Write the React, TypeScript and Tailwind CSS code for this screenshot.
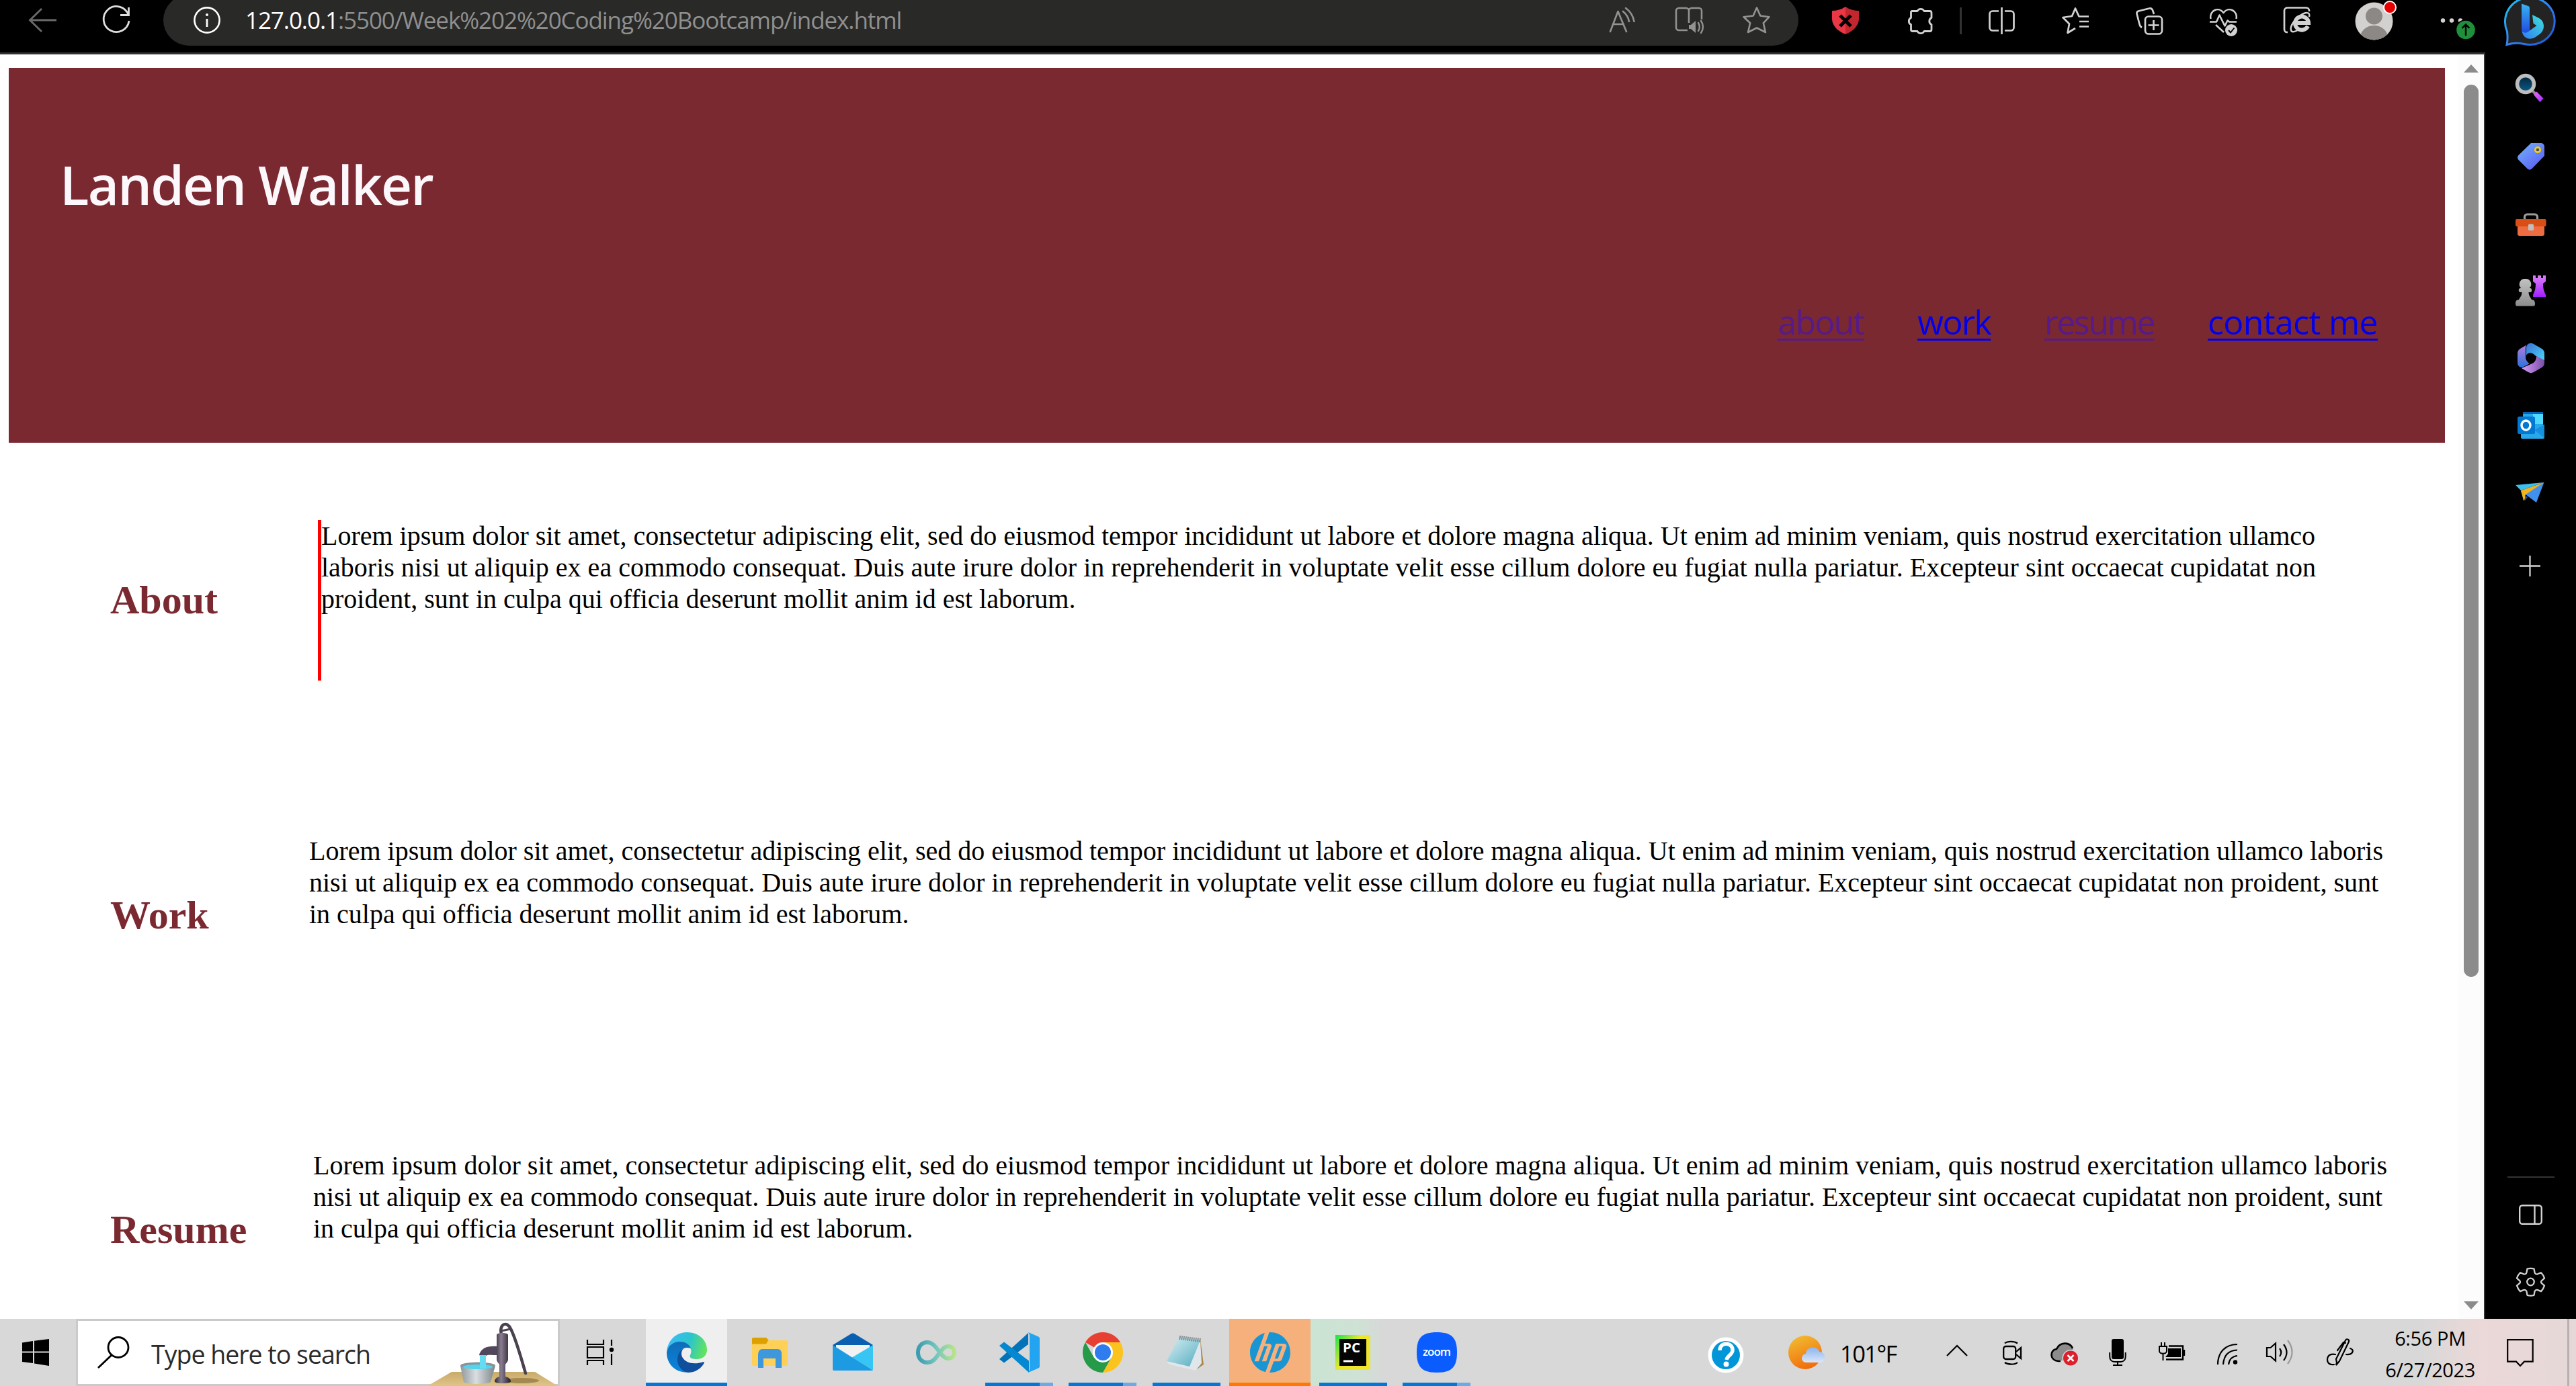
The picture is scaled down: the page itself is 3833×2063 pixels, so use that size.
import React from "react";
import { SiHp } from "react-icons/si";

type IconProps = {
  w: number;
  h: number;
  className?: string;
  vb?: string;
  children: React.ReactNode;
};

/** Inline drawing with its own pixel size. */
function Icon({ w, h, className = "", vb, children }: IconProps) {
  return (
    <svg
      width={w}
      height={h}
      viewBox={vb ?? `0 0 ${w} ${h}`}
      fill="none"
      className={`shrink-0 overflow-visible ${className}`}
    >
      {children}
    </svg>
  );
}

const LIGHT = "#d2d2d2";
const GREY = "#929292";

function AddressBar() {
  return (
    <div className="ml-[49px] mt-[-8px] flex h-[76px] w-[2433px] shrink-0 items-center rounded-full bg-[#292928]">
      <Icon w={40} h={40} className="ml-[45px]">
        <circle cx="20" cy="20" r="18.6" stroke="#fff" strokeWidth="2.6" />
        <path d="M20 18v12" stroke="#fff" strokeWidth="2.8" />
        <circle cx="20" cy="12" r="2" fill="#fff" />
      </Icon>
      <div className="ml-[37px] w-[2030px] whitespace-nowrap text-[35px] leading-[50px] tracking-[-1.08px] text-[#8f8f8f]">
        <span className="text-white">127.0.0.1</span>:5500/Week%202%20Coding%20Bootcamp/index.html
      </div>
      <Icon w={38} h={36}>
        <path d="M1 35 12.500 5 25 35M5 24h16" stroke={GREY} strokeWidth="2.6" strokeLinecap="round" strokeLinejoin="round" />
        <path d="M20 5c5 4 8 9 9 15M24 0c7 5 11 11 12.500 20" stroke={GREY} strokeWidth="2.600" strokeLinecap="round" />
      </Icon>
      <Icon w={43} h={38} className="ml-[60px]">
        <path
          d="M18 34H5a4 4 0 0 1-4-4V5a4 4 0 0 1 4-4h11a4 4 0 0 1 4 4v18M20 5a4 4 0 0 1 4-4h11a4 4 0 0 1 4 4v13"
          stroke={GREY}
          strokeWidth="2.600"
        />
        <path d="M20 26h3l7-6v18l-7-6h-3z" fill={GREY} />
        <path d="M34 23c2.500 4 2.500 8 0 12M38 20c4 6 4 12 0 18" stroke={GREY} strokeWidth="2.400" strokeLinecap="round" />
      </Icon>
      <Icon w={42} h={40} className="ml-[57px]">
        <path
          d="M21 1.500 26.300 13.500 39.500 15.200 30.800 24.300 34 38 21 31.500 8 38 11.200 24.300 1.500 15.200 15.700 13.500Z"
          stroke={GREY}
          strokeWidth="2.600"
          strokeLinejoin="round"
        />
      </Icon>
    </div>
  );
}

function BingLogo() {
  return (
    <Icon w={75} h={73} className="ml-[45px] mt-[-5px]">
      <defs>
        <linearGradient id="bingRing" x1="0" y1="0" x2="1" y2="1">
          <stop offset="0" stopColor="#19c7f2" />
          <stop offset="0.5" stopColor="#2f86f5" />
          <stop offset="1" stopColor="#1b53d8" />
        </linearGradient>
        <linearGradient id="bingStem" x1="0" y1="0" x2="0" y2="1">
          <stop offset="0" stopColor="#38b4f2" />
          <stop offset="1" stopColor="#2049e0" />
        </linearGradient>
        <linearGradient id="bingBowl" x1="0" y1="1" x2="1" y2="0">
          <stop offset="0" stopColor="#2f7bf5" />
          <stop offset="1" stopColor="#3fe3d8" />
        </linearGradient>
      </defs>
      <path
        d="M37.500 1.500A36 35 0 1 1 37 71.500C28 72 20 66 2 71.500 4 63 3 58 2.500 52A36 36 0 0 1 37.500 1.500Z"
        fill="#232323"
        stroke="url(#bingRing)"
        strokeWidth="3"
      />
      <path d="M24 10.500 34 14a3 3 0 0 1 2 3v34c-4 6-11 5-12-3Z" fill="url(#bingStem)" />
      <path d="M40 27 50 32c9 5 9 17 2 23l-7 5c-9 6-19 2-20.500-9 3 4 8 3 11 0l11-8-5-3Z" fill="url(#bingBowl)" />
    </Icon>
  );
}

function BrowserBar() {
  return (
    <div className="flex h-[81px] shrink-0 items-start overflow-hidden bg-black">
      <Icon w={41} h={36} className="ml-[43px] mt-[12px]">
        <path d="M41 18H2M19 1 1.500 18 19 35" stroke="#6a6a6a" strokeWidth="2.800" />
      </Icon>
      <Icon w={42} h={41} className="ml-[68px] mt-[10px]">
        <path d="M39 12A19 19 0 1 0 40 21" stroke="#dedede" strokeWidth="2.800" />
        <path d="M39.500 1v11.500H27" stroke="#dedede" strokeWidth="2.800" />
      </Icon>
      <AddressBar />
      <Icon w={40} h={41} className="ml-[50px] mt-[10px]">
        <path d="M20 0c6 4 13 6 20 6v12c0 10-8 18-20 23Z" fill="#c2272f" />
        <path d="M20 0C14 4 7 6 0 6v12c0 10 8 18 20 23Z" fill="#e93745" />
        <path d="m12 13 16 16M28 13 12 29" stroke="#000" strokeWidth="5" />
      </Icon>
      <Icon w={38} h={40} className="ml-[72px] mt-[11px]">
        <path
          d="M6.500 5.500H15a5.500 5.500 0 0 1 10 0h8.500a2.500 2.500 0 0 1 2.500 2.500v7.500a5.500 5.500 0 0 0 0 10V33a2.500 2.500 0 0 1-2.500 2.500H25a5.500 5.500 0 0 1-10 0H8A2.500 2.500 0 0 1 5.500 33v-7.500a5.500 5.500 0 0 1 0-10V6.500Z"
          stroke={LIGHT}
          strokeWidth="2.800"
          strokeLinejoin="round"
        />
      </Icon>
      <div className="ml-[40px] mt-[11px] h-[40px] w-[3px] shrink-0 bg-[#333]" />
      <Icon w={39} h={40} className="ml-[40px] mt-[11px]">
        <path
          d="M15 5.500H6A4.500 4.500 0 0 0 1.500 10v20A4.500 4.500 0 0 0 6 34.500h9M24 5.500h9a4.500 4.500 0 0 1 4.500 4.500v20a4.500 4.500 0 0 1-4.500 4.500h-9M19.500 0v40"
          stroke={LIGHT}
          strokeWidth="2.700"
        />
      </Icon>
      <Icon w={40} h={40} className="ml-[70px] mt-[11px]">
        <path
          d="M40 13.500H25.500L20 1.500 15 13 1.500 15 11 24.500 8.500 38 20 31M26 21h14M26 28.500h14"
          stroke={LIGHT}
          strokeWidth="2.700"
          strokeLinejoin="round"
        />
      </Icon>
      <Icon w={40} h={41} className="ml-[70px] mt-[11px]">
        <rect x="14" y="13.500" width="25" height="26" rx="5" stroke={LIGHT} strokeWidth="2.700" />
        <path d="M26.500 19v15M18.500 26.500h16M9 30c-2-1-3-3-3.500-5L1.500 9.500A3.500 3.500 0 0 1 4 5.500L20 1.500c2-.6 4 .5 5 2.500l2 6" stroke={LIGHT} strokeWidth="2.700" />
      </Icon>
      <Icon w={41} h={41} className="ml-[70px] mt-[13px]">
        <path
          d="M1.500 15C-1 3 13-4 20.500 6 28-4 42 3 39.500 15M0 19.500h10l4.500-10 8 16 4-8 2.500 2H40M9 24l12 11"
          stroke={LIGHT}
          strokeWidth="2.600"
          strokeLinejoin="round"
        />
        <circle cx="32" cy="32" r="9" fill={LIGHT} />
        <path d="m28 32 3 3.500 5.500-7" stroke="#000" strokeWidth="2" />
      </Icon>
      <Icon w={40} h={40} className="ml-[69px] mt-[10px]">
        <path d="M6 38H5a4 4 0 0 1-4-4V5.500A4.500 4.500 0 0 1 5.500 1.500h28A4.500 4.500 0 0 1 38 6v1" stroke={LIGHT} strokeWidth="2.700" />
        <path d="M36 29a10 10 0 1 1 1-5H18" stroke={LIGHT} strokeWidth="6" />
        <path d="M38 15c2-8-6-7-13-2C15 20 9 30 11 35c1 4 7 2 11-1" stroke={LIGHT} strokeWidth="2.500" />
      </Icon>
      <div className="relative ml-[66px] mt-[3px] shrink-0">
        <Icon w={57} h={57} className="block">
          <defs>
            <clipPath id="avatarClip">
              <circle cx="28.500" cy="28.500" r="28" />
            </clipPath>
          </defs>
          <circle cx="28.500" cy="28.500" r="28" fill="#d3d1cf" />
          <g clipPath="url(#avatarClip)" fill="#8b8886">
            <circle cx="28.500" cy="21" r="12.500" />
            <ellipse cx="28.500" cy="53" rx="20.500" ry="18" />
          </g>
        </Icon>
        <div className="absolute left-[42px] top-[-2px] h-[20px] w-[20px] rounded-full border-2 border-white bg-[#e60000]" />
      </div>
      <Icon w={51} h={29} className="ml-[71px] mt-[27px]">
        <g fill={LIGHT}>
          <circle cx="3" cy="3.500" r="3.200" />
          <circle cx="16" cy="3.500" r="3.200" />
          <circle cx="29" cy="3.500" r="3.200" />
        </g>
        <circle cx="37" cy="17.500" r="15.500" fill="#000" />
        <circle cx="37" cy="17.500" r="13.800" fill="#1f8f3c" />
        <path d="M37 26V9.500M31.500 15l5.500-5.500 5.500 5.500" stroke="#000" strokeWidth="2.400" />
      </Icon>
      <BingLogo />
    </div>
  );
}

const BODY = {
  about: [
    "Lorem ipsum dolor sit amet, consectetur adipiscing elit, sed do eiusmod tempor incididunt ut labore et dolore magna aliqua. Ut enim ad minim veniam, quis nostrud exercitation ullamco",
    "laboris nisi ut aliquip ex ea commodo consequat. Duis aute irure dolor in reprehenderit in voluptate velit esse cillum dolore eu fugiat nulla pariatur. Excepteur sint occaecat cupidatat non",
    "proident, sunt in culpa qui officia deserunt mollit anim id est laborum.",
  ],
  wide: [
    "Lorem ipsum dolor sit amet, consectetur adipiscing elit, sed do eiusmod tempor incididunt ut labore et dolore magna aliqua. Ut enim ad minim veniam, quis nostrud exercitation ullamco laboris",
    "nisi ut aliquip ex ea commodo consequat. Duis aute irure dolor in reprehenderit in voluptate velit esse cillum dolore eu fugiat nulla pariatur. Excepteur sint occaecat cupidatat non proident, sunt",
    "in culpa qui officia deserunt mollit anim id est laborum.",
  ],
};

function Section({ title, titleClass, bodyClass, lines }: { title: string; titleClass: string; bodyClass: string; lines: string[] }) {
  return (
    <section className="flex h-[468.500px] shrink-0 items-start pl-[164px] font-['Liberation_Serif',serif]">
      <h2 className={`mt-[85px] shrink-0 text-[60px] font-bold leading-[69px] text-[#7b2931] ${titleClass}`}>{title}</h2>
      <p className={`shrink-0 whitespace-nowrap text-[40px] leading-[47px] text-black ${bodyClass}`}>
        {lines.map((line, i) => (
          <span key={i} className="block">
            {line}
          </span>
        ))}
      </p>
    </section>
  );
}

function Page() {
  return (
    <div className="flex w-[3658px] shrink-0 flex-col overflow-hidden bg-white">
      <header className="mb-[115px] ml-[13px] mt-[20px] flex h-[558px] w-[3625px] shrink-0 flex-col bg-[#7b2931] font-['Open_Sans',sans-serif]">
        <h1 className="ml-[76px] mt-[119px] whitespace-nowrap text-[80px] font-semibold leading-[108px] tracking-[-1.85px] text-[#fbf7fb]">
          Landen Walker
        </h1>
        <nav className="mr-[100px] mt-[119px] flex justify-end gap-[80px] whitespace-nowrap text-[50px] leading-[64px] text-[#0000ee] underline decoration-[3px] underline-offset-[6px]">
          <a className="tracking-[-1.8px] text-[#551a8b]">about</a>
          <a className="tracking-[-1.7px]">work</a>
          <a className="tracking-[-2.4px] text-[#551a8b]">resume</a>
          <a className="tracking-[-0.65px]">contact me</a>
        </nav>
      </header>
      <Section title="About" titleClass="w-[309px]" bodyClass="h-[239px] border-l-[5px] border-[#ff0000]" lines={BODY.about} />
      <Section title="Work" titleClass="w-[296px]" bodyClass="" lines={BODY.wide} />
      <Section title="Resume" titleClass="w-[302px]" bodyClass="" lines={BODY.wide} />
    </div>
  );
}

function ScrollBar() {
  return (
    <div className="flex w-[38px] shrink-0 flex-col items-center bg-[#fcfcfc]">
      <Icon w={22} h={12} className="mt-[15px]">
        <path d="M0 12 11 0l11 12z" fill="#8b8b8b" />
      </Icon>
      <div className="mt-[18px] h-[1328px] w-[22px] rounded-full bg-[#8b8b8b]" />
      <Icon w={22} h={12} className="mb-[14px] mt-auto">
        <path d="M0 0 11 12 22 0z" fill="#8b8b8b" />
      </Icon>
    </div>
  );
}

function SideBar() {
  return (
    <aside className="flex w-[137px] shrink-0 flex-col items-start border-l-2 border-[#333] bg-black">
      <Icon w={42} h={42} className="ml-[45px] mt-[32px]">
        <defs>
          <linearGradient id="lens" x1="0" y1="0" x2="0" y2="1">
            <stop offset="0" stopColor="#04243a" />
            <stop offset="1" stopColor="#0a5c8c" />
          </linearGradient>
          <linearGradient id="handle" x1="0" y1="0" x2="1" y2="1">
            <stop offset="0" stopColor="#f06bf0" />
            <stop offset="1" stopColor="#9a2bff" />
          </linearGradient>
        </defs>
        <path d="m24 24 6 6" stroke="#8c8c8c" strokeWidth="4" />
        <circle cx="15" cy="15" r="12.500" fill="url(#lens)" stroke="#bdbdbd" strokeWidth="5.500" />
        <path d="m27 31 4.500-4.500 10 10L36.500 42z" fill="url(#handle)" />
      </Icon>
      <Icon w={40} h={40} className="ml-[48px] mt-[61px]">
        <defs>
          <linearGradient id="tag" x1="0" y1="0" x2="0.800" y2="1">
            <stop offset="0" stopColor="#74b4fb" />
            <stop offset="1" stopColor="#5a5ef5" />
          </linearGradient>
        </defs>
        <path d="M20 0h15a5 5 0 0 1 5 5v14L21 38.500a5 5 0 0 1-6 0L1.500 25a5 5 0 0 1 0-7Z" fill="url(#tag)" />
        <circle cx="30" cy="10" r="3.700" fill="#474a7a" stroke="#f7cf08" strokeWidth="2.800" />
      </Icon>
      <Icon w={46} h={34} className="ml-[45px] mt-[64px]">
        <path d="M13.500 9V6a4 4 0 0 1 4-4h11a4 4 0 0 1 4 4v3" stroke="#9d9d9d" strokeWidth="3.200" />
        <path d="M3 16h40v15a3 3 0 0 1-3 3H6a3 3 0 0 1-3-3z" fill="#ee6c42" />
        <rect y="9" width="45.500" height="11" rx="2" fill="#d94e14" />
        <rect x="19" y="16.500" width="8" height="9.500" rx="1.500" fill="#c0c0c0" />
      </Icon>
      <Icon w={46} h={46} className="ml-[45px] mt-[59px]">
        <defs>
          <linearGradient id="rook" x1="0" y1="0" x2="0" y2="1">
            <stop offset="0" stopColor="#db80fa" />
            <stop offset="1" stopColor="#a21fff" />
          </linearGradient>
          <linearGradient id="pawn" x1="0" y1="0" x2="0" y2="1">
            <stop offset="0" stopColor="#c2c2c2" />
            <stop offset="1" stopColor="#8d8d8d" />
          </linearGradient>
        </defs>
        <path d="M26 0h4v4h3V0h5v4h3V0h4v9l-4 3c0 7 1 11 4 17v3H26v-3c3-6 4-10 4-17l-4-3z" fill="url(#rook)" />
        <path
          d="M14.500 5a8 8 0 0 1 6 14h1.500c3 0 3 6 0 6h-2.500c0 5 3 8 4.500 11 4 0 5 3 5 6s-1 3.500-3 3.500H3c-2 0-3-.5-3-3.500s1-6 5-6c1.500-3 4.500-6 4.500-11H7c-3 0-3-6 0-6h1.500a8 8 0 0 1 6-14Z"
          fill="url(#pawn)"
        />
      </Icon>
      <Icon w={40} h={44} className="ml-[48px] mt-[55px]">
        <defs>
          <linearGradient id="m1" x1="0" y1="0" x2="0" y2="1">
            <stop offset="0" stopColor="#bb7ee0" />
            <stop offset="1" stopColor="#2d72dc" />
          </linearGradient>
          <linearGradient id="m2" x1="0" y1="0" x2="1" y2="1">
            <stop offset="0" stopColor="#3b6fd3" />
            <stop offset="1" stopColor="#49dafa" />
          </linearGradient>
          <linearGradient id="m3" x1="0" y1="0" x2="1" y2="0">
            <stop offset="0" stopColor="#d79bfb" />
            <stop offset="1" stopColor="#7a4fa5" />
          </linearGradient>
        </defs>
        <path d="M16 1 4 8c-3 2-4 4-4 7v14c0 5 4 8 9 6l9-5c-4-2-6-6-6-10V7c0-3 1-5 4-6Z" fill="url(#m1)" />
        <path d="M13 18V7c0-6 6-9 11-6l12 7c3 2 4 4 4 7v11L26 18c-4-5-11-5-13 0Z" fill="url(#m2)" />
        <path d="M28 19 40 25v4c0 3-1 5-4 7l-12 7c-3 1.500-5 1.500-8 0L6 37l16-7c4-2 6-6 6-11Z" fill="url(#m3)" />
      </Icon>
      <Icon w={40} h={40} className="ml-[48px] mt-[58px]">
        <path d="M8 1.500A1.500 1.500 0 0 1 9.500 0h27A1.500 1.500 0 0 1 38 1.500V30H8Z" fill="#28a8ea" />
        <path d="M8 0h30v3H8z" fill="#0364b8" />
        <path d="M23 3h15v15H23z" fill="#50d9ff" />
        <path d="M5 26 40 19v19a2 2 0 0 1-2 2H7a2 2 0 0 1-2-2z" fill="#28a8ea" />
        <path d="m40 19-15 8 15 12z" fill="#1490df" />
        <rect y="7" width="26" height="26" rx="2.500" fill="#0078d4" />
        <ellipse cx="12.500" cy="20" rx="6.500" ry="7" stroke="#fff" strokeWidth="3.400" />
      </Icon>
      <Icon w={43} h={31} className="ml-[45px] mt-[65px]">
        <path d="M0 4 42 0 8 12Z" fill="#3cc0f0" />
        <path d="M42.500 0 31 30 15 18 13 27 8 13Z" fill="#4090ee" />
        <path d="M42.500 0 8 12l4 15c2 1 2-7 3-9Z" fill="#f4b31c" />
        <path d="m14 19 4 3-4 5z" fill="#1657b4" />
      </Icon>
      <Icon w={31} h={31} className="ml-[51px] mt-[78px]">
        <path d="M15.500 0v31M0 15.500h31" stroke={LIGHT} strokeWidth="2.300" />
      </Icon>
      <div className="ml-[33px] mt-auto h-[2px] w-[70px] bg-[#333]" />
      <Icon w={35} h={30} className="ml-[50px] mt-[40px]">
        <rect x="1.200" y="1.200" width="32.600" height="27.600" rx="4" stroke={LIGHT} strokeWidth="2.400" />
        <path d="M23.500 1v28" stroke={LIGHT} strokeWidth="2.400" />
      </Icon>
      <Icon w={42} h={43} className="mb-[34px] ml-[47px] mt-[63px]">
        <path
          d="M15.500 2.500a20 20 0 0 1 10 0l1 5.500c.5 2 2.500 3 4.500 2.300l5-2a20 20 0 0 1 5 8.400l-4 3.500a2.500 2.500 0 0 0 0 4l4 3.500a20 20 0 0 1-5 8.400l-5-2c-2-.7-4 .3-4.500 2.300l-1 5.500a20 20 0 0 1-10 0l-1-5.500c-.5-2-2.500-3-4.500-2.300l-5 2a20 20 0 0 1-5-8.400l4-3.500a2.500 2.500 0 0 0 0-4l-4-3.500a20 20 0 0 1 5-8.400l5 2c2 .7 4-.3 4.500-2.300z"
          stroke={LIGHT}
          strokeWidth="2.300"
          strokeLinejoin="round"
        />
        <circle cx="20.500" cy="22" r="5.300" stroke={LIGHT} strokeWidth="2.300" />
      </Icon>
    </aside>
  );
}

function Pump() {
  return (
    <Icon w={194} h={96} className="mt-[4px]">
      <defs>
        <linearGradient id="iron" x1="0" y1="0" x2="1" y2="0">
          <stop offset="0" stopColor="#2d2730" />
          <stop offset="0.400" stopColor="#8a7d92" />
          <stop offset="1" stopColor="#231d27" />
        </linearGradient>
        <linearGradient id="pail" x1="0" y1="0" x2="1" y2="0">
          <stop offset="0" stopColor="#8f989d" />
          <stop offset="0.450" stopColor="#d9dee0" />
          <stop offset="1" stopColor="#7d868b" />
        </linearGradient>
        <linearGradient id="wood" x1="0" y1="0" x2="0" y2="1">
          <stop offset="0" stopColor="#c9ab6a" />
          <stop offset="1" stopColor="#dfc488" />
        </linearGradient>
      </defs>
      <path d="M36 75h124l34 21H0Z" fill="url(#wood)" />
      <ellipse cx="140" cy="88" rx="26" ry="4" fill="#8f7440" opacity="0.700" />
      <path d="M110 19c-4-16 9-20 14-8 8 16 16 45 22 66" stroke="#4b4250" strokeWidth="4.500" strokeLinecap="round" />
      <path d="m110 14 14-3" stroke="#4b4250" strokeWidth="3" />
      <path d="M77 49c4-10 12-13 27-12v13c-10 0-14-1-17 1h-9z" fill="#51475a" />
      <path d="M103 20c0-4 17-4 17 0v36c0 4-3 6-4 8v18c5 1 8 4 8 7 0 2-4 3-12 3s-12-1-12-3c0-3 3-6 7-7V64c-1-2-4-4-4-8Z" fill="url(#iron)" />
      <path d="m49 66 5 24c4 4 36 4 40 0l7-24Z" fill="url(#pail)" />
      <ellipse cx="75" cy="65.500" rx="26" ry="5" fill="#89949a" />
      <ellipse cx="75" cy="67.500" rx="22" ry="3.500" fill="#4fd5ee" />
      <path d="M78 50h9v20h-9z" fill="#66dcf2" />
    </Icon>
  );
}

function EdgeLogo() {
  return (
    <Icon w={60} h={60} className="mx-auto mt-[20px]">
      <defs>
        <linearGradient id="edgeTop" x1="0" y1="0.300" x2="1" y2="0.500">
          <stop offset="0" stopColor="#3cbcf8" />
          <stop offset="0.550" stopColor="#2bc4cf" />
          <stop offset="1" stopColor="#62e45c" />
        </linearGradient>
        <linearGradient id="edgeLeft" x1="0" y1="0" x2="0" y2="1">
          <stop offset="0" stopColor="#0f6cb8" />
          <stop offset="1" stopColor="#0a85dd" />
        </linearGradient>
      </defs>
      <path d="M0 30C1 12 14 0 30 0c18 0 30 12 30 26 0 9-7 14-15 14-7 0-12-2-10-6 5-10-4-19-15-19C10 15 2 21 0 30Z" fill="url(#edgeTop)" />
      <path d="M0 30C2 19 11 14 19 14c8 0 15 4 17 10-12-4-21 5-15 19 3 8 10 14 17 15C20 64 0 52 0 30Z" fill="url(#edgeLeft)" />
      <path d="M28 23c-4 1-6 5-6 9 0 9 12 19 33 12 1 0 1 1 .5 2C51 55 41 60 32 60c-9-1-16-10-16-19 0-8 4-16 12-18Z" fill="#0f4f9c" />
    </Icon>
  );
}

function Bar({ split = false }: { split?: boolean }) {
  return (
    <div className="flex h-[5px] w-[101px] bg-[#0078d7]">
      {split && <div className="ml-auto h-full w-[20px] bg-[#68abe5]" />}
    </div>
  );
}

function AppTile({ children, bar, className = "" }: { children: React.ReactNode; bar?: React.ReactNode; className?: string }) {
  return (
    <div className={`flex h-[100px] shrink-0 flex-col items-center ${className}`}>
      <div className="flex w-full flex-1 items-center justify-center pt-[5px]">{children}</div>
      <div className="flex h-[5px] shrink-0 items-center">{bar}</div>
    </div>
  );
}

function TaskBar() {
  return (
    <footer className="flex h-[100px] shrink-0 items-start overflow-hidden bg-[#d8d8d8] bg-[linear-gradient(90deg,#d8d8d8_0px,#d8d8d8_3600px,#ebd8d8_3690px,#e6d8d8_3833px)] font-['Open_Sans',sans-serif]">
      <Icon w={40} h={40} className="ml-[33px] mt-[30px]" vb="0 0 40 40">
        <path d="M0 5.500 16 3v15.500H0ZM18 2.700 40 0v18.500H18ZM0 20.500h16V36L0 34ZM18 20.500h22V40l-22-3.500Z" fill="#000" />
      </Icon>
      <div className="ml-[40px] flex h-[100px] w-[720px] shrink-0 items-start border-x-[3px] border-[#cacaca] bg-[linear-gradient(#cacaca_3px,#fff_3px,#fff_97px,#cacaca_97px)]">
        <Icon w={48} h={48} className="ml-[29px] mt-[26px]">
          <circle cx="31" cy="16.500" r="15" stroke="#000" strokeWidth="2.800" />
          <path d="M21 28 1 47" stroke="#000" strokeWidth="2.800" />
        </Icon>
        <div className="ml-[32px] mt-[27px] w-[413px] whitespace-nowrap text-[37.500px] leading-[52px] tracking-[-1px] text-[#2b2b2b]">
          Type here to search
        </div>
        <Pump />
      </div>
      <Icon w={40} h={38} className="ml-[40px] mt-[31px]">
        <path d="M1 0v7h24V0M1 11h24v16H1zM1 38v-7h24v7M37 0v9M37 21v17" stroke="#000" strokeWidth="2.200" />
        <circle cx="37" cy="15" r="3.200" fill="#000" />
      </Icon>

      <AppTile className="ml-[48px] w-[121px] bg-[#efefef]" bar={<div className="h-[5px] w-[121px] bg-[#0078d7]" />}>
        <div className="-mt-[21px]">
          <EdgeLogo />
        </div>
      </AppTile>
      <AppTile className="ml-[3px] w-[121px]">
        <Icon w={53} h={45} className="mt-[0px]">
          <path d="M0 2a2 2 0 0 1 2-2h19l4 4v8H0z" fill="#dea000" />
          <path d="M0 9.500h21l3-5.500h27a2 2 0 0 1 2 2v34a2 2 0 0 1-2 2H2a2 2 0 0 1-2-2z" fill="#fed057" />
          <path d="M9 26c0-5 2-9 6-9h23c4 0 6 3 6 7v21h-9V31H17v14H9Z" fill="#3f97dc" />
        </Icon>
      </AppTile>
      <AppTile className="ml-[2px] w-[121px]">
        <Icon w={60} h={56} className="-mt-[2px]">
          <path d="M0 18 27 1.500a5 5 0 0 1 6 0L60 18 45 32H12Z" fill="#0a5fb0" />
          <path d="M5 18h50v22H5z" fill="#f2f2f2" />
          <path d="M60 18v36a2 2 0 0 1-2 2L28 37Z" fill="#37c6f3" />
          <path d="M0 18 60 56H2a2 2 0 0 1-2-2Z" fill="#1c9be3" />
        </Icon>
      </AppTile>
      <AppTile className="ml-[3px] w-[121px]">
        <Icon w={60} h={36}>
          <defs>
            <linearGradient id="loop" x1="0" y1="0" x2="1" y2="0">
              <stop offset="0" stopColor="#3c9cb0" />
              <stop offset="0.500" stopColor="#74c6be" />
              <stop offset="1" stopColor="#b5e585" />
            </linearGradient>
          </defs>
          <path
            d="M34 20C28 29 24 33 17 33 8 33 3 26 3 18S8 3 17 3c14 0 19 24 31 24 6 0 9-4 9-9s-3-9-9-9c-6 0-9 5-14 11Z"
            stroke="url(#loop)"
            strokeWidth="6"
          />
        </Icon>
      </AppTile>
      <AppTile className="ml-[3px] w-[121px]" bar={<Bar split />}>
        <Icon w={60} h={60}>
          <path d="M0 40 43 1v17L7 45.500Z" fill="#0273b8" />
          <path d="M0 20 7 14.500 44 42.500V60Z" fill="#0588d2" />
          <path d="m43 0 15 6.500c1.500.7 2 1.500 2 3v41c0 1.500-.5 2.300-2 3L43 60l2-4V4Z" fill="#23a4f1" />
        </Icon>
      </AppTile>
      <AppTile className="ml-[3px] w-[121px]" bar={<Bar split />}>
        <Icon w={60} h={60}>
          <path d="M30 30 4 15a30 30 0 0 1 52 0H30Z" fill="#e83f33" />
          <path d="M56 15a30 30 0 0 1-26 45l13-22.500L30 15Z" fill="#fcc31f" />
          <path d="M4 15a30 30 0 0 0 26 45l12-21-25-1Z" fill="#259a48" />
          <circle cx="30" cy="30" r="15" fill="#fff" />
          <circle cx="30" cy="30" r="12" fill="#2f7cee" />
        </Icon>
      </AppTile>
      <AppTile className="ml-[4px] w-[121px]" bar={<Bar />}>
        <Icon w={56} h={53} className="ml-[-4px]">
          <defs>
            <linearGradient id="pad" x1="0" y1="0" x2="1" y2="1">
              <stop offset="0" stopColor="#d9f0f5" />
              <stop offset="1" stopColor="#53acbd" />
            </linearGradient>
          </defs>
          <path d="m50 6 5 38-10 7Z" fill="#ab8749" />
          <path d="m50 8 2 34-9 11L4 44l-4-4Z" fill="#dfe7ec" />
          <path d="M18 4 50 8 34 47 0 39Z" fill="url(#pad)" />
          <path d="m19 4 32 4" stroke="#70777b" strokeWidth="6" strokeDasharray="1.500 1.500" />
        </Icon>
      </AppTile>
      <AppTile className="ml-[3px] w-[121px] bg-[#f6b07b]" bar={<div className="h-[5px] w-[121px] bg-[#ff7800]" />}>
        <SiHp className="h-[60px] w-[60px] text-[#1995d4]" />
      </AppTile>
      <AppTile className="w-[127px] bg-[linear-gradient(90deg,#cbe4d4_0px,#cee2d5_70px,#d8d8d8_110px)]" bar={<Bar />}>
        <Icon w={52} h={52} className="-ml-[2px]">
          <defs>
            <linearGradient id="pyc" x1="0" y1="0" x2="0.700" y2="0.500">
              <stop offset="0" stopColor="#17e24b" />
              <stop offset="0.700" stopColor="#e6e82d" />
              <stop offset="1" stopColor="#efe52e" />
            </linearGradient>
          </defs>
          <path d="M0 0h52v52H0z" fill="url(#pyc)" />
          <path d="M6 6h40v40H6z" fill="#050505" />
          <text x="11" y="26" fontSize="19.500" fontWeight="700" fill="#fff" fontFamily="Open Sans, sans-serif" textLength="26" lengthAdjust="spacingAndGlyphs">
            PC
          </text>
          <path d="M12 37.500h14v3H12z" fill="#fff" />
        </Icon>
      </AppTile>
      <AppTile className="w-[121px]" bar={<Bar split />}>
        <Icon w={60} h={60}>
          <path d="M30 0C8 0 0 8 0 30s8 30 30 30 30-8 30-30S52 0 30 0Z" fill="#0b5cff" />
          <text x="9" y="35" fontSize="17" fontWeight="600" fill="#fff" fontFamily="Open Sans, sans-serif" textLength="42">
            zoom
          </text>
        </Icon>
      </AppTile>

      <Icon w={54} h={54} className="ml-[343px] mt-[27px]">
        <circle cx="27" cy="27" r="26.500" fill="#fff" />
        <circle cx="27" cy="27" r="21" fill="#0096d8" />
        <path d="M18 20c0-14 20-12 19 0 0 6-8 8-9 14" stroke="#fff" strokeWidth="5.500" />
        <circle cx="27.500" cy="40.500" r="4" fill="#fff" />
      </Icon>
      <Icon w={55} h={50} className="ml-[66px] mt-[25px]">
        <defs>
          <linearGradient id="sun" x1="0.200" y1="0" x2="0.600" y2="1">
            <stop offset="0" stopColor="#f0bd30" />
            <stop offset="1" stopColor="#f26a0b" />
          </linearGradient>
          <linearGradient id="cloud" x1="0" y1="0" x2="0" y2="1">
            <stop offset="0" stopColor="#8db4ee" />
            <stop offset="1" stopColor="#dbe6fa" />
          </linearGradient>
        </defs>
        <circle cx="25" cy="25" r="25" fill="url(#sun)" />
        <path d="M27 40c-9 0-9-12-1-13 1-12 18-12 20-3 11 0 11 16 1 16Z" fill="url(#cloud)" />
      </Icon>
      <div className="ml-[22px] mt-[27px] w-[89px] whitespace-nowrap text-[34.500px] leading-[50px] tracking-[-1.6px] text-black">
        101°F
      </div>
      <Icon w={32} h={17} className="ml-[69px] mt-[39px]">
        <path d="M1 16 16 1l15 15" stroke="#000" strokeWidth="2.200" />
      </Icon>
      <Icon w={28} h={36} className="ml-[52px] mt-[33px]">
        <rect x="1.200" y="8" width="18" height="19" rx="3.500" stroke="#000" strokeWidth="2.300" />
        <path d="m20 16 7-6v16l-7-6M3 3.500C7 0 17 0 22 3.500M3 32c5 3.500 15 3.500 19 0" stroke="#000" strokeWidth="2.300" />
      </Icon>
      <Icon w={40} h={35} className="ml-[44px] mt-[35px]">
        <path d="M16 27H10C-3 26-2 11 8 10 13-1 28-1 32 9c1 1 0 4-2 4-6 1-10 5-12 14Z" fill="#8c8c8c" />
        <path d="M14 28h-3C-3 27-2 11 8 10 13-1 28-1 32 9" stroke="#000" strokeWidth="2.600" />
        <circle cx="29" cy="23.500" r="12.500" fill="#d8d8d8" />
        <circle cx="29" cy="23.500" r="11" fill="#dc202c" />
        <path d="m24.500 19 9 9M33.500 19l-9 9" stroke="#fff" strokeWidth="2.600" />
      </Icon>
      <Icon w={26} h={40} className="ml-[46px] mt-[30px]">
        <rect x="4" width="18" height="30" rx="3" fill="#000" />
        <path d="M1.200 20v6c0 5 3 8 7 8h9.500c4 0 7-3 7-8v-6M13 34v5M6 39h14" stroke="#000" strokeWidth="2" />
      </Icon>
      <Icon w={40} h={29} className="ml-[48px] mt-[34px]">
        <path d="M4 1v6M9 1v6M1 7h11v7c0 5-11 5-11 0ZM6.500 17v11" stroke="#000" strokeWidth="2" />
        <path d="M15 6.500h21v20H11M38 12v9" stroke="#000" strokeWidth="2.400" />
        <path d="M14 10h19v13H10l4-5Z" fill="#000" />
      </Icon>
      <Icon w={31} h={31} className="ml-[47px] mt-[37px]">
        <path d="M1 31C1 13 12 1 30 1M9 31C10 17 17 10 30 9.500M17 31c1-8 5-12 13-13" stroke="#000" strokeWidth="2.200" />
        <circle cx="27" cy="27.500" r="3.200" fill="#000" />
      </Icon>
      <Icon w={40} h={37} className="ml-[42px] mt-[31px]">
        <path d="M1 12h5.500L14 5.500v26L6.500 25H1ZM20 13c3 4 3 8 0 12M26 7c6 8 6 16 0 24" stroke="#000" strokeWidth="2.200" />
        <path d="M32 1c9 12 9 23 0 35" stroke="#999" strokeWidth="2.200" />
      </Icon>
      <Icon w={40} h={41} className="ml-[50px] mt-[29px]">
        <path d="M15 36 14 31 28 3c2-3 6-1 5 2L19 34l-5 6zM28 7l-3-1-9 12M13 24C4 22 1 27 1 32c0 5 4 8 10 7M35 15c7 2 4 10-6 9" stroke="#000" strokeWidth="2.200" strokeLinecap="round" />
      </Icon>
      <div className="ml-[40px] mt-[5px] flex w-[148px] shrink-0 flex-col items-center whitespace-nowrap text-[29px] leading-[47px] tracking-[-0.4px] text-black">
        <span>6:56 PM</span>
        <span>6/27/2023</span>
      </div>
      <Icon w={40} h={40} className="ml-[40px] mt-[30px]">
        <path d="M1.200 1.200h37.500v32.500H26L20 40l-6-6.300H1.200Z" stroke="#000" strokeWidth="2.200" />
      </Icon>
      <div className="ml-[50px] h-full w-[3px] bg-[#b9b0b0]" />
    </footer>
  );
}

export default function App() {
  return (
    <div className="flex h-[2063px] w-[3833px] flex-col overflow-hidden bg-white font-['Open_Sans',sans-serif]">
      <BrowserBar />
      <div className="-mt-[3px] flex min-h-0 flex-1">
        <div className="flex min-h-0 w-[3696px] shrink-0 border-t-[3px] border-[#333]">
          <Page />
          <ScrollBar />
        </div>
        <SideBar />
      </div>
      <TaskBar />
    </div>
  );
}
